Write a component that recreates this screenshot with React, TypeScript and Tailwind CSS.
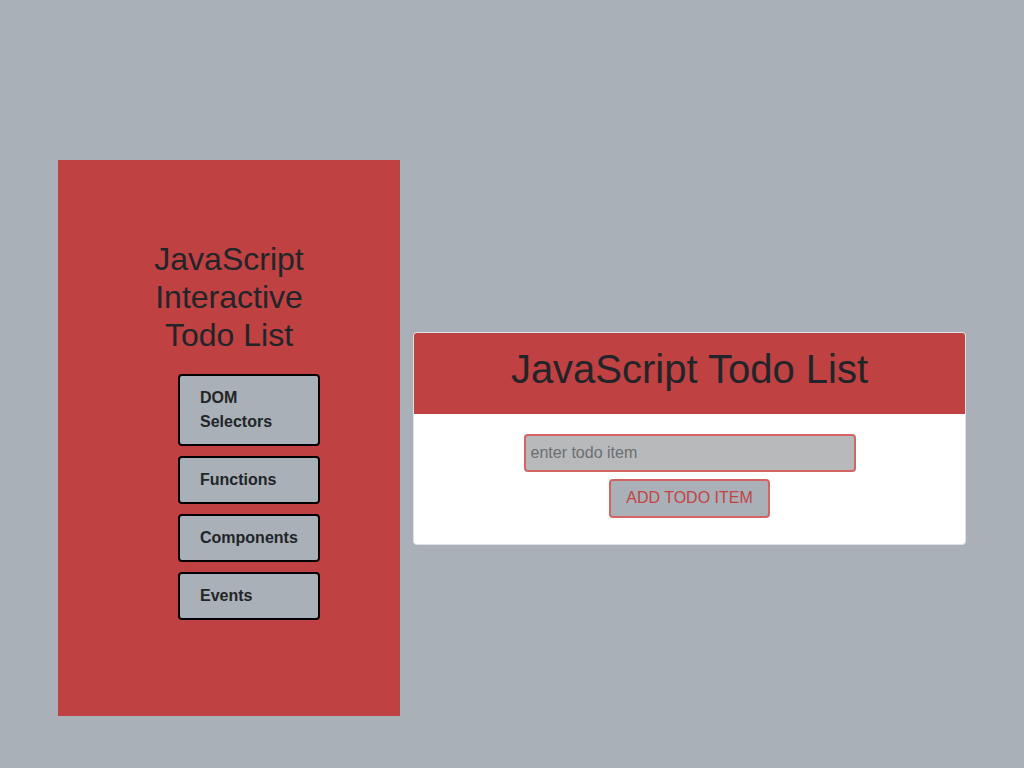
export default function App() {
  const topics = ["DOM Selectors", "Functions", "Components", "Events"];

  return (
    <div className="min-h-[768px] bg-[#a9b0b7] font-['Liberation_Sans',Arial,sans-serif] text-[#212529]">
      <div className="flex items-center gap-[13px] px-[58px] pt-[160px]">
        {/* Sidebar */}
        <aside className="flex h-[556px] w-[342px] shrink-0 flex-col bg-[#bf4141] pt-[80px]">
          <h1 className="mx-auto w-[171px] text-center text-[32px] leading-[38px]">
            JavaScript Interactive Todo List
          </h1>
          <div className="ml-[120px] mt-[20px] flex flex-col gap-[10px]">
            {topics.map((t) => (
              <button
                key={t}
                className="w-[142px] rounded-[4px] border-2 border-black bg-[#a9b0b7] px-5 py-[10px] text-left text-base font-bold leading-6 text-[#212529]"
              >
                {t}
              </button>
            ))}
          </div>
        </aside>

        {/* Todo card */}
        <section className="w-[553px] overflow-hidden rounded-[4px] border border-[#dee2e6] bg-white">
          <header className="bg-[#bf4141] pb-[21px] pt-3 text-center text-[40px] leading-[48px]">
            JavaScript Todo List
          </header>
          <div className="flex flex-col items-center pb-[26px] pt-[20px]">
            <input
              placeholder="enter todo item"
              className="h-[38px] w-[332px] rounded-[4px] border-2 border-[#d46464] bg-[#b7b9bb] px-[5px] text-base text-[#212529] placeholder:text-[#6c6f72] focus:outline-none"
            />
            <button className="mt-[7px] h-[39px] w-[161px] rounded-[4px] border-2 border-[#d46464] bg-[#a9b0b7] text-base text-[#c44343]">
              ADD TODO ITEM
            </button>
          </div>
        </section>
      </div>
    </div>
  );
}
